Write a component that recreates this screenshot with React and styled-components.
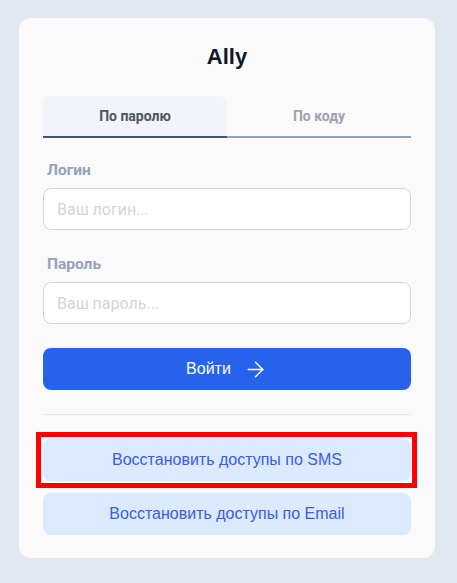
import React, { useState } from "react";
import styled, { createGlobalStyle } from "styled-components";
import { ArrowRight } from "lucide-react";

const Global = createGlobalStyle`
  html, body { margin: 0; padding: 0; background: #e2e8f0; }
  body { font-family: Roboto, "Noto Sans", sans-serif; }
  * { box-sizing: border-box; }
`;

const Page = styled.div`
  padding: 18px 22px 25px 19px;
`;

const Card = styled.div`
  background: #fafafa;
  border-radius: 12px;
  padding: 24px 24px 23px;
  display: flex;
  flex-direction: column;
`;

const Title = styled.h1`
  margin: 0 0 24px;
  font-family: "Liberation Sans", Arial, sans-serif;
  font-size: 22px;
  line-height: 30px;
  font-weight: 700;
  text-align: center;
  color: #111827;
`;

const Tabs = styled.div`
  display: grid;
  grid-template-columns: 1fr 1fr;
  margin-bottom: 22px;
`;

const Tab = styled.button`
  height: 42px;
  border: none;
  border-bottom: 2px solid ${(p) => (p.$active ? "#475569" : "#94a3b8")};
  background: ${(p) => (p.$active ? "#f1f5f9" : "transparent")};
  border-radius: 8px 8px 0 0;
  font-family: Roboto, sans-serif;
  font-size: 14px;
  font-weight: 700;
  color: ${(p) => (p.$active ? "#4b5563" : "#9ca3af")};
  cursor: pointer;
  padding: 0;
`;

const Field = styled.div`
  display: flex;
  flex-direction: column;
  margin-bottom: 24px;
`;

const Label = styled.label`
  font-size: 15.5px;
  line-height: 20px;
  font-weight: 700;
  color: #94a3b8;
  padding-left: 4px;
  margin-bottom: 8px;
`;

const Input = styled.input`
  height: 42px;
  border: 1px solid #d1d5db;
  border-radius: 8px;
  background: #ffffff;
  padding: 0 13px;
  font-family: Roboto, sans-serif;
  font-size: 16px;
  color: #111827;
  outline: none;
  &::placeholder { color: #d1d5db; }
`;

const Primary = styled.button`
  height: 42px;
  border: none;
  border-radius: 8px;
  background: #2563eb;
  color: #ffffff;
  font-family: "Liberation Sans", Arial, sans-serif;
  font-size: 16px;
  display: flex;
  align-items: center;
  justify-content: center;
  gap: 12px;
  cursor: pointer;
  svg { margin-top: 1px; }
`;

const Divider = styled.hr`
  border: none;
  border-top: 1px solid #e2e8f0;
  margin: 24px 0 24px;
`;

const Secondary = styled.button`
  width: 100%;
  height: 42px;
  border: none;
  border-radius: 8px;
  background: #dbeafe;
  color: #3a5ce4;
  font-family: "Liberation Sans", Arial, sans-serif;
  font-size: 16px;
  cursor: pointer;
  display: block;
`;

const Highlight = styled.div`
  border: 5px solid #ff0000;
  padding: 2px 1px 2px 2px;
  margin: -7px -6px -7px -7px;
`;

const Stack = styled.div`
  display: flex;
  flex-direction: column;
  gap: 12px;
`;

export default function App() {
  const [tab, setTab] = useState(0);
  return (
    <Page>
      <Global />
      <Card>
        <Title>Ally</Title>
        <Tabs>
          <Tab $active={tab === 0} onClick={() => setTab(0)}>По паролю</Tab>
          <Tab $active={tab === 1} onClick={() => setTab(1)}>По коду</Tab>
        </Tabs>
        <Field>
          <Label>Логин</Label>
          <Input placeholder="Ваш логин..." />
        </Field>
        <Field>
          <Label>Пароль</Label>
          <Input type="password" placeholder="Ваш пароль..." />
        </Field>
        <Primary>
          Войти
          <ArrowRight size={25} strokeWidth={1.4} />
        </Primary>
        <Divider />
        <Stack>
          <Highlight>
            <Secondary>Восстановить доступы по SMS</Secondary>
          </Highlight>
          <Secondary>Восстановить доступы по Email</Secondary>
        </Stack>
      </Card>
    </Page>
  );
}
